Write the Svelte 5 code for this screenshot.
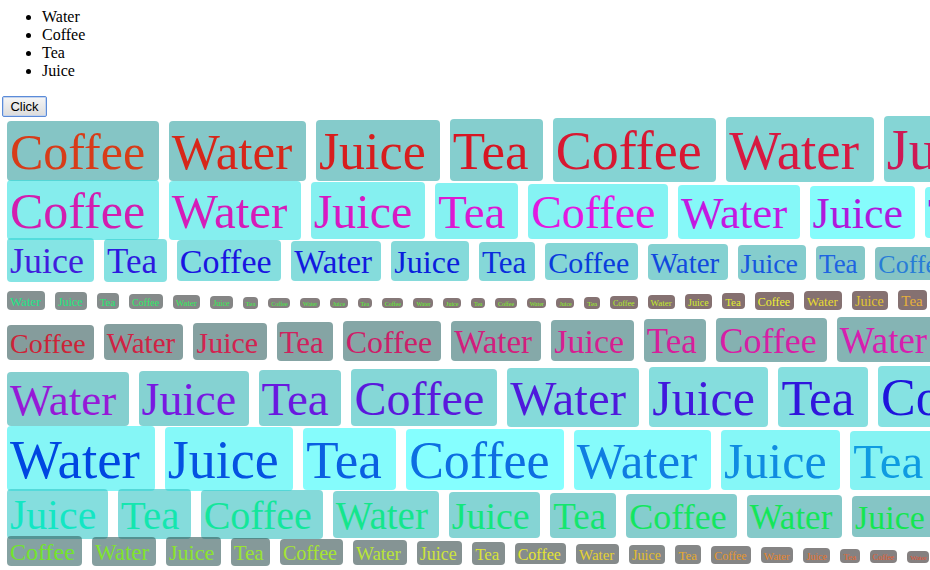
<script>
  const drinks = ['Water', 'Coffee', 'Tea', 'Juice'];
  const cycle = ['Coffee', 'Water', 'Juice', 'Tea'];

  // how many words stand in each line of the stream
  const lineLengths = [12, 14, 23, 39, 17, 12, 13, 18, 18];

  // word number -> text colour
  const inkStops = [
    [0, 215, 60, 25], [1, 215, 38, 25], [3, 215, 22, 35], [5, 215, 25, 65], [6, 205, 25, 85],
    [12, 210, 30, 175], [14, 215, 25, 195], [16, 225, 25, 225], [17, 195, 25, 225], [18, 175, 25, 220],
    [26, 65, 30, 220], [28, 25, 20, 225], [30, 10, 30, 220], [32, 10, 60, 220], [35, 30, 100, 225],
    [36, 40, 125, 215], [49, 30, 230, 135], [55, 60, 240, 70], [60, 90, 245, 40], [66, 140, 245, 35],
    [69, 195, 235, 40], [72, 240, 240, 50], [74, 225, 195, 50], [75, 230, 175, 60],
    [88, 205, 35, 55], [90, 210, 35, 80], [92, 205, 30, 105], [94, 215, 30, 145], [97, 215, 30, 175],
    [105, 150, 25, 215], [106, 120, 25, 225], [108, 90, 25, 220], [110, 65, 25, 220], [112, 30, 20, 220],
    [117, 0, 70, 225], [119, 10, 95, 225], [121, 15, 125, 225], [123, 15, 155, 225],
    [130, 20, 230, 195], [132, 20, 230, 155], [136, 20, 230, 95], [138, 20, 230, 80],
    [148, 115, 228, 45], [152, 165, 228, 50], [154, 205, 228, 60], [156, 228, 228, 50],
    [158, 230, 190, 45], [160, 230, 150, 45], [162, 230, 115, 45], [165, 230, 80, 45]
  ];

  // word number -> green and blue share of the tile
  const tileStops = [
    [0, 197], [3, 206], [4, 211], [6, 213], [12, 237], [16, 243], [18, 252], [26, 228],
    [28, 222], [32, 214], [35, 200], [36, 196], [49, 145], [55, 130], [60, 120], [70, 112],
    [75, 113], [88, 156], [92, 166], [97, 180], [105, 207], [108, 215], [112, 226], [117, 246],
    [120, 255], [123, 243], [130, 222], [134, 212], [138, 197], [148, 162], [152, 150],
    [156, 140], [160, 133], [165, 128]
  ];

  const ALPHA = 0.6;

  function mix(stops, n) {
    const next = stops.findIndex((s) => s[0] >= n);
    if (next < 0) return stops[stops.length - 1].slice(1);
    if (next === 0) return stops[0].slice(1);
    const a = stops[next - 1];
    const b = stops[next];
    const t = (n - a[0]) / (b[0] - a[0]);
    return a.slice(1).map((v, i) => Math.round(v + (b[i + 1] - v) * t));
  }

  // sizes swing between 1 and 56, and never get smaller than 6 on screen
  function sizeOf(n) {
    const phase = (n + 49) % 110;
    return Math.max(6, phase <= 55 ? phase + 1 : 111 - phase);
  }

  function look(n) {
    const layer = (v) => Math.round((v - 255 * (1 - ALPHA)) / ALPHA);
    const [tile] = mix(tileStops, n);
    return `font-size:${sizeOf(n)}px;color:rgb(${mix(inkStops, n).join(',')});` +
      `background:rgba(${layer(133)},${layer(tile)},${layer(tile)},${ALPHA})`;
  }

  function build(offset) {
    let n = 0;
    return lineLengths.map((count) =>
      Array.from({ length: count }, () => {
        const word = { text: cycle[(n + offset) % 4] + ' ', style: look(n) };
        n += 1;
        return word;
      })
    );
  }

  let offset = $state(0);
  let lines = $derived(build(offset));
</script>

<main>
  <ul>
    {#each drinks as drink}
      <li>{drink}</li>
    {/each}
  </ul>
  <button type="button" onclick={() => (offset += 1)}>Click</button>
  <div class="stream">
    {#each lines as line}
      <div class="line">{#each line as word}<span style={word.style}>{word.text}</span>{/each}</div>
    {/each}
  </div>
</main>

<style>
  :global(body) {
    margin: 0;
    background: #fff;
  }

  main {
    height: 100vh;
    box-sizing: border-box;
    padding: 8px 0 0 2px;
    overflow: hidden;
    font-family: "Liberation Serif", "Times New Roman", serif;
    font-size: 16px;
    color: #000;
  }

  ul {
    margin: 0 0 16px;
    padding-left: 40px;
    line-height: 18px;
  }

  button {
    display: block;
    min-width: 45px;
    height: 21px;
    padding: 0 7px;
    border: 1px solid #5b8bd8;
    border-radius: 2px;
    box-shadow: inset 0 0 0 1px #c3d3ee;
    background: linear-gradient(#f6f6f6, #dcdcdc);
    font: 13px/19px "Liberation Sans", Arial, sans-serif;
    color: #000;
  }

  .stream {
    padding-top: 1px;
  }

  .line {
    white-space: pre;
  }

  span {
    margin: 0 5px;
    padding: 3px 1px 1px 3px;
    border-radius: 4px;
  }
</style>
